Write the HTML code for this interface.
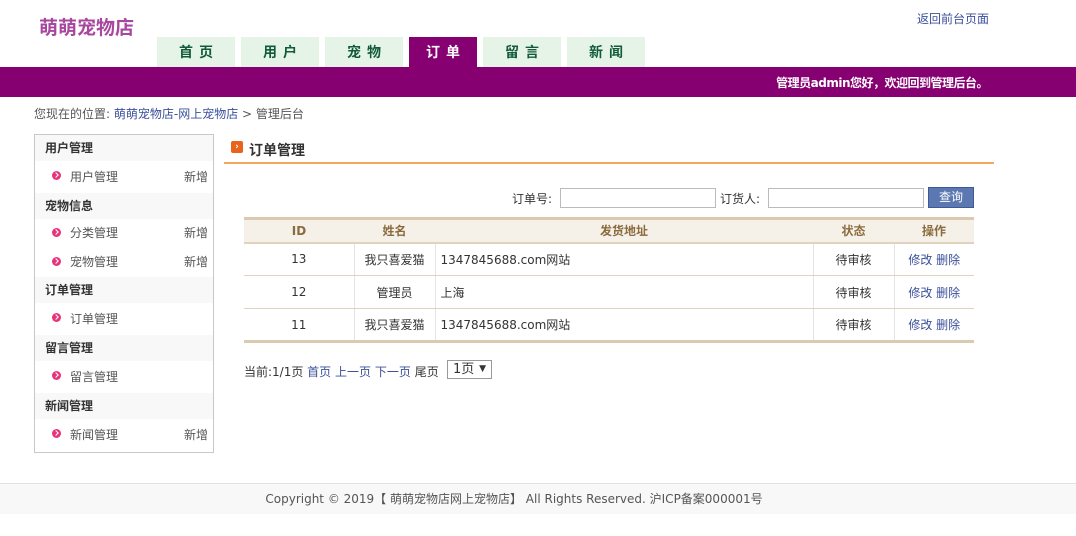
<!DOCTYPE html>
<html><head><meta charset="utf-8"><style>
*{margin:0;padding:0;box-sizing:border-box}
body{width:1076px;height:536px;background:#fff;font-family:"DejaVu Sans","Noto Sans CJK SC",sans-serif;font-size:12px;color:#333;position:relative;overflow:hidden}
.a{position:absolute;white-space:nowrap}
.logo{left:39px;top:13px;font-size:19px;font-weight:bold;color:#a8479e;font-family:"Liberation Sans","Noto Sans CJK SC",sans-serif}
.tab{top:37px;height:30px;width:78px;background:#e6f4e8;color:#125a3c;font-weight:bold;font-size:14px;text-align:center;line-height:33px;letter-spacing:6px;text-indent:6px}
.tab.on{background:#870072;color:#fff;width:68px}
.bar{left:0;top:67px;width:1076px;height:30px;background:#870072}
a{color:#3a4f9a;text-decoration:none}
.side{left:34px;top:134px;width:180px;height:319px;border:1px solid #c8c8c8}
.h{height:26px;line-height:26px;background:#f8f8f8;font-weight:bold;padding-left:10px;color:#333}
.it{height:32px;line-height:32px;padding-left:35px;position:relative;color:#555}
.it2{height:29px;line-height:29px}
.it:before{content:"";position:absolute;left:17px;top:50%;margin-top:-6px;width:9px;height:9px;border-radius:50%;background:#e8337a}
.it:after{content:"";position:absolute;left:19px;top:50%;margin-top:-4px;width:3px;height:3px;border-right:1.5px solid #fff;border-top:1.5px solid #fff;transform:rotate(45deg)}
.it span{position:absolute;right:5px}
table{position:absolute;left:244px;top:217px;width:730px;border-collapse:collapse;border-top:3px solid #dccab0;border-bottom:3px solid #dccab0}
th{background:#f5f1e8;height:24px;color:#8b6b3e;font-weight:bold;border-bottom:2px solid #e0d2bd;font-size:12px}
td{height:33px;border-bottom:1px solid #e0d2bd;border-left:1px solid #e4e4e4;text-align:center}
td:first-child{border-left:none}
td.l{text-align:left;padding-left:5px}
input{position:absolute;height:20px;border:1px solid #bbb;background:#fff}
</style></head><body>
<div class="a logo">萌萌宠物店</div>
<div class="a" style="left:917px;top:10px"><a>返回前台页面</a></div>
<div class="a tab" style="left:157px">首页</div>
<div class="a tab" style="left:241px">用户</div>
<div class="a tab" style="left:325px">宠物</div>
<div class="a tab on" style="left:409px">订单</div>
<div class="a tab" style="left:483px">留言</div>
<div class="a tab" style="left:567px">新闻</div>
<div class="a bar"></div>
<div class="a" style="right:88px;top:74px;color:#fff;font-weight:bold;font-size:12px;letter-spacing:-0.5px">管理员admin您好，欢迎回到管理后台。</div>
<div class="a" style="left:34px;top:105px;color:#555">您现在的位置: <a>萌萌宠物店-网上宠物店</a> &gt; 管理后台</div>
<div class="a side">
<div class="h">用户管理</div><div class="it">用户管理<span>新增</span></div>
<div class="h">宠物信息</div><div class="it it2">分类管理<span>新增</span></div><div class="it it2">宠物管理<span>新增</span></div>
<div class="h">订单管理</div><div class="it">订单管理</div>
<div class="h">留言管理</div><div class="it">留言管理</div>
<div class="h">新闻管理</div><div class="it">新闻管理<span>新增</span></div>
</div>
<div class="a" style="left:231px;top:141px;width:12px;height:12px;background:#e8641c;border-radius:2px;color:#fff;font-size:9px;line-height:12px;text-align:center;font-weight:bold">›</div>
<div class="a" style="left:249px;top:140px;font-size:14px;font-weight:bold;color:#333">订单管理</div>
<div class="a" style="left:224px;top:162px;width:770px;height:2px;background:#f5a65b"></div>
<div class="a" style="left:512px;top:190px">订单号:</div>
<input style="left:560px;top:188px;width:156px">
<div class="a" style="left:720px;top:190px">订货人:</div>
<input style="left:768px;top:188px;width:156px">
<div class="a" style="left:928px;top:187px;width:46px;height:21px;background:#5b78b2;border:1px solid #3e5a96;color:#fff;text-align:center;line-height:19px">查询</div>
<table>
<tr><th style="width:110px">ID</th><th style="width:81px">姓名</th><th>发货地址</th><th style="width:81px">状态</th><th style="width:80px">操作</th></tr>
<tr><td>13</td><td>我只喜爱猫</td><td class="l">1347845688.com网站</td><td>待审核</td><td><a>修改</a> <a>删除</a></td></tr>
<tr><td>12</td><td>管理员</td><td class="l">上海</td><td>待审核</td><td><a>修改</a> <a>删除</a></td></tr>
<tr><td>11</td><td>我只喜爱猫</td><td class="l">1347845688.com网站</td><td>待审核</td><td><a>修改</a> <a>删除</a></td></tr>
</table>
<div class="a" style="left:244px;top:363px">当前:1/1页 <a>首页</a> <a>上一页</a> <a>下一页</a> 尾页</div>
<div class="a" style="left:447px;top:360px;width:45px;height:19px;border:1px solid #999;font-size:13px;line-height:17px;padding-left:5px">1页 <span style="font-size:9px;position:absolute;right:5px;top:0">▼</span></div>
<div class="a" style="left:0;top:483px;width:1076px;height:31px;background:#f8f8f8;border-top:1px solid #e2e2e2;text-align:center;line-height:30px;color:#555;font-size:12px;padding-right:48px">Copyright © 2019【 萌萌宠物店网上宠物店】 All Rights Reserved. 沪ICP备案000001号</div>
</body></html>
